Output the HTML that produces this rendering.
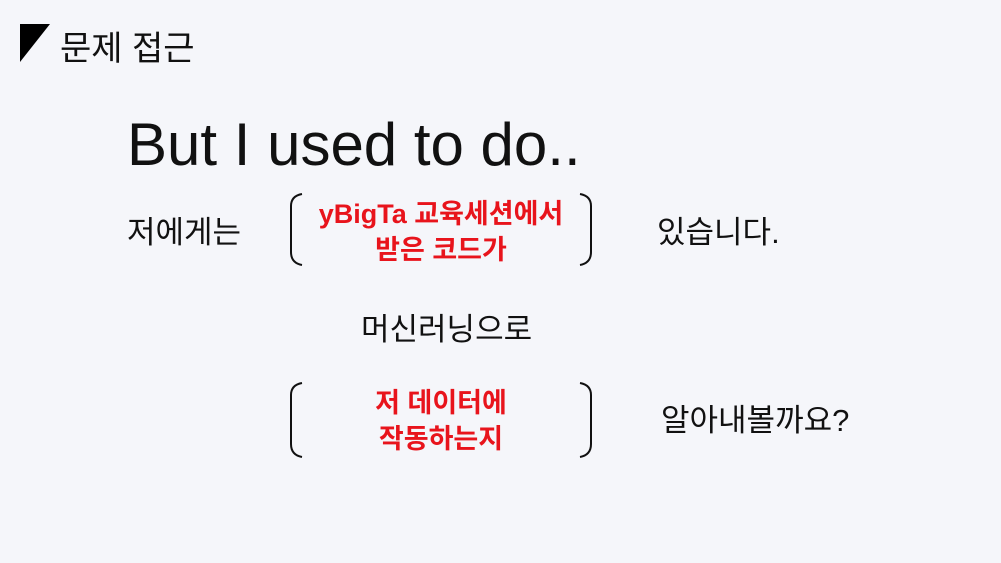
<!DOCTYPE html>
<html><head><meta charset="utf-8"><style>
body{margin:0;width:1001px;height:563px;background:#f5f6fa;position:relative;overflow:hidden;font-family:"Liberation Sans","Noto Sans CJK KR",sans-serif;color:#111}
.t{position:absolute;white-space:nowrap}
.r{color:#e8141c;font-weight:bold;text-align:center;line-height:36px;font-size:27px}
</style></head><body>
<svg class="t" style="left:0;top:0" width="1001" height="563">
<polygon points="20,24 50,24 20,62" fill="#000"/>
<g fill="none" stroke="#111" stroke-width="2">
<path d="M302,194 Q291,196 291,206 L291,252 Q291,263 302,265"/>
<path d="M580,194 Q591,196 591,206 L591,252 Q591,263 580,265"/>
<path d="M302,383 Q291,385 291,395 L291,444 Q291,455 302,457"/>
<path d="M580,383 Q591,385 591,395 L591,444 Q591,455 580,457"/>
</g></svg>
<div class="t" style="left:60px;top:21px;font-size:34px">문제 접근</div>
<div class="t" style="left:127px;top:110px;font-size:60px">But I used to do..</div>
<div class="t" style="left:127px;top:207px;font-size:31px">저에게는</div>
<div class="t r" style="left:300px;top:196px;width:282px">yBigTa 교육세션에서<br>받은 코드가</div>
<div class="t" style="left:657px;top:207px;font-size:31px">있습니다.</div>
<div class="t" style="left:361px;top:304px;font-size:31px">머신러닝으로</div>
<div class="t r" style="left:300px;top:385px;width:282px">저 데이터에<br>작동하는지</div>
<div class="t" style="left:661px;top:395px;font-size:31px">알아내볼까요?</div>
</body></html>
